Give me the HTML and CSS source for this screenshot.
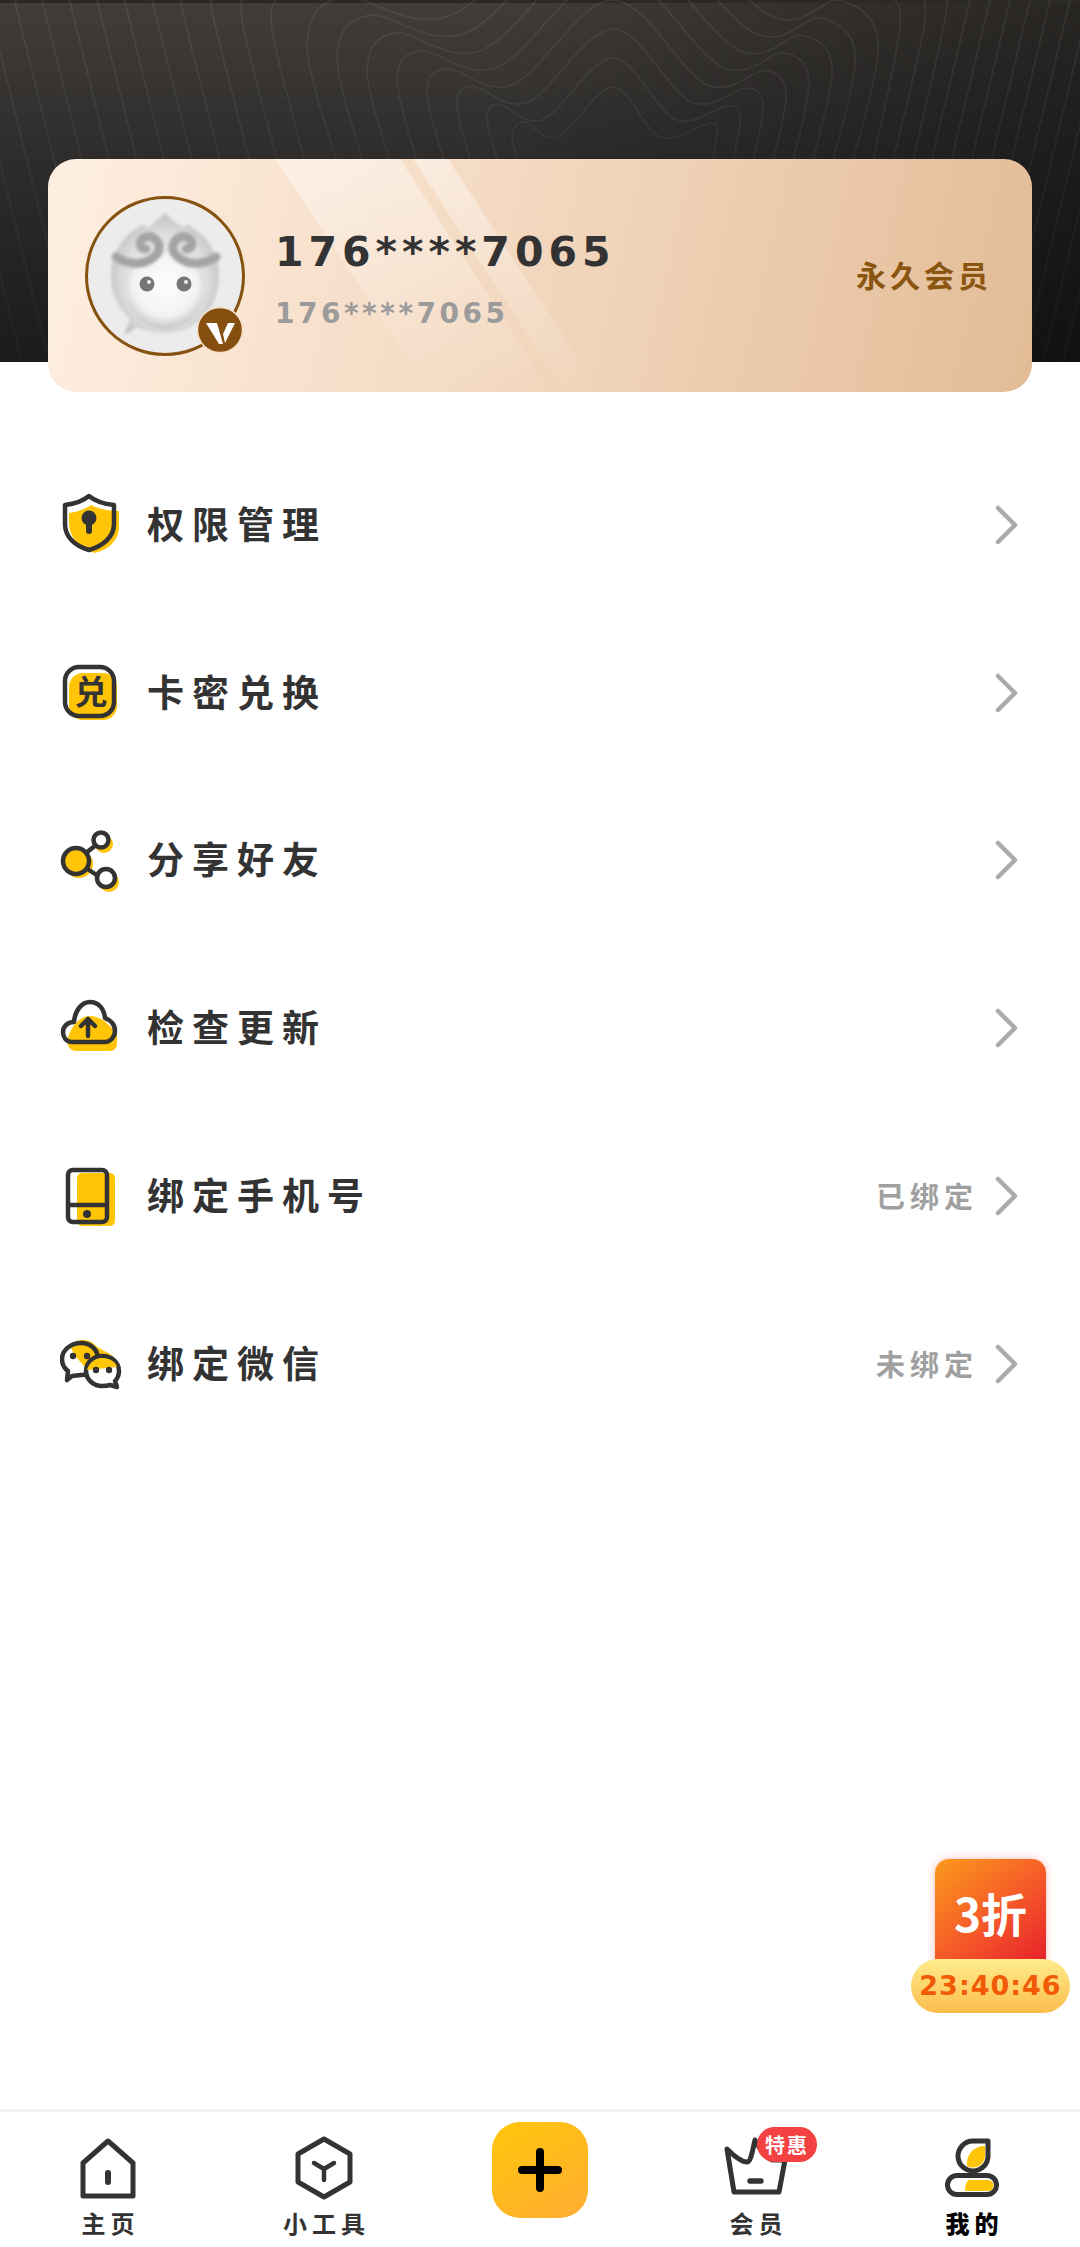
FILE: index.html
```html
<!DOCTYPE html>
<html>
  <head>
    <title>我的</title>
    <meta http-equiv="Content-Type" content="text/html; charset=UTF-8"/>
    <link rel="stylesheet" href="styles.css">
  </head>
  <body>
    <div class="page">
      <header class="hero">
        <svg class="hero-lines" viewBox="0 0 1080 362" fill="none">
          <defs>
            <linearGradient id="fade" gradientUnits="userSpaceOnUse" x1="0" y1="0" x2="0" y2="362">
              <stop offset="0" stop-color="#fff" stop-opacity=".07"/>
              <stop offset="1" stop-color="#fff" stop-opacity=".025"/>
            </linearGradient>
          </defs>
          <g id="contours" stroke="url(#fade)" stroke-width="1.600"></g>
        </svg>
        <section class="card">
          <svg class="card-shine" viewBox="0 0 984 233">
            <defs>
              <linearGradient id="shine" x1="0" y1="0" x2="0" y2="1">
                <stop offset="0" stop-color="#fff" stop-opacity=".42"/>
                <stop offset="1" stop-color="#fff" stop-opacity=".02"/>
              </linearGradient>
            </defs>
            <polygon points="227,0 352,0 503,233 382,233" fill="url(#shine)"/>
            <polygon points="365,0 400,0 552,233 517,233" fill="url(#shine)"/>
          </svg>
          <div class="avatar">
            <svg class="avatar-face" viewBox="0 0 154 154">
              <defs>
                <filter id="soft"><feGaussianBlur stdDeviation="1.600"/></filter>
                <radialGradient id="skin" cx=".5" cy=".55" r=".55">
                  <stop offset="0" stop-color="#f2f2f2"/>
                  <stop offset=".7" stop-color="#dedede"/>
                  <stop offset="1" stop-color="#bfbfbf"/>
                </radialGradient>
                <radialGradient id="face" cx=".5" cy=".4" r=".6">
                  <stop offset="0" stop-color="#fdfdfd"/>
                  <stop offset=".72" stop-color="#f2f2f2"/>
                  <stop offset="1" stop-color="#c4c4c4"/>
                </radialGradient>
              </defs>
              <g filter="url(#soft)">
                <path d="M23 76 C23 52 38 34 54 26 L60 28 C66 24 71 20 77 14 C83 20 88 24 94 28 L100 26 C116 34 131 52 131 76 C131 110 108 134 77 134 C66 134 56 132 50 128 L36 136 L42 120 C30 110 23 94 23 76Z" fill="url(#skin)"/>
                <circle cx="77" cy="92" r="38" fill="url(#face)"/>
                <path d="M28 58 C44 68 60 66 70 54 C74 44 66 36 58 38 C50 40 50 50 58 50" fill="none" stroke="#a4a4a4" stroke-width="9" stroke-linecap="round"/>
                <path d="M128 58 C112 68 96 66 86 54 C82 44 90 36 98 38 C106 40 106 50 98 50" fill="none" stroke="#a4a4a4" stroke-width="9" stroke-linecap="round"/>
              </g>
              <circle cx="59" cy="85" r="7.500" fill="#757575"/>
              <circle cx="96" cy="85" r="7.500" fill="#757575"/>
              <circle cx="61" cy="83" r="2" fill="#eee"/>
              <circle cx="98" cy="83" r="2" fill="#eee"/>
            </svg>
            <svg class="avatar-badge" viewBox="0 0 48 48">
              <circle cx="24" cy="24" r="22.500" fill="#85500f" stroke="#f7dfc4" stroke-width="1.500"/>
              <path d="M10 17 H21 L27 38 H23Z M27 28 L32 17 H39 L29 37Z" fill="#fff"/>
            </svg>
          </div>
          <div class="user">
            <div class="user-name">176****7065</div>
            <div class="user-sub">176****7065</div>
          </div>
          <div class="user-level">永久会员</div>
        </section>
      </header>

      <main class="list">
        <div class="row">
          <svg class="row-icon" viewBox="0 0 64 64">
            <path d="M31 12 C39 16 49 18 59 18 V34 C59 48 47 57 35 60 C21 56 10 46 9 31 V20 C17 19 25 16 31 12Z" fill="#ffc506"/>
            <path d="M29 3 C35 8 44 11 54 12 V31 C54 44 43 53 29 57 C15 53 5 44 5 31 V12 C14 11 23 8 29 3Z" fill="none" stroke="#333" stroke-width="4.500" stroke-linejoin="round"/>
            <circle cx="29" cy="25" r="7.500" fill="#333"/>
            <path d="M29 26 V38" stroke="#333" stroke-width="6" stroke-linecap="round"/>
          </svg>
          <span class="row-title">权限管理</span>
          <svg class="chevron" viewBox="0 0 24 40"><path d="M3 3 L20 20 L3 37"/></svg>
        </div>
        <div class="row">
          <svg class="row-icon" viewBox="0 0 64 64">
            <rect x="9" y="12" width="48" height="47" rx="14" fill="#ffc506"/>
            <rect x="5" y="6" width="49" height="49" rx="14" fill="none" stroke="#333" stroke-width="4.500"/>
            <text x="31" y="43" class="icon-text">兑</text>
          </svg>
          <span class="row-title">卡密兑换</span>
          <svg class="chevron" viewBox="0 0 24 40"><path d="M3 3 L20 20 L3 37"/></svg>
        </div>
        <div class="row">
          <svg class="row-icon" viewBox="0 0 64 64">
            <circle cx="44" cy="16" r="9" fill="#ffc506"/>
            <circle cx="49" cy="54" r="10" fill="#ffc506"/>
            <circle cx="19" cy="36" r="14" fill="#ffc506"/>
            <path d="M26 25 L36 17 M26 40 L38 48" stroke="#333" stroke-width="4.500"/>
            <circle cx="16" cy="33" r="13" fill="#ffc506" stroke="#333" stroke-width="4.500"/>
            <circle cx="41" cy="12" r="7.500" fill="#fff" stroke="#333" stroke-width="4.500"/>
            <circle cx="46" cy="50" r="9" fill="#fff" stroke="#333" stroke-width="4.500"/>
          </svg>
          <span class="row-title">分享好友</span>
          <svg class="chevron" viewBox="0 0 24 40"><path d="M3 3 L20 20 L3 37"/></svg>
        </div>
        <div class="row">
          <svg class="row-icon" viewBox="0 0 64 64">
            <path d="M7 46 C9 34 18 20 30 20 C42 20 50 30 57 38 V48 C57 52 54 55 50 55 H16 C11 55 8 51 7 46Z" fill="#ffc506"/>
            <path d="M12 46 C6 46 3 41 3 36 C3 30 8 26 14 26 C15 14 22 6 30 6 C38 6 44 12 45 22 C51 24 55 29 55 35 C55 41 50 46 45 46Z" fill="none" stroke="#333" stroke-width="4.500" stroke-linejoin="round"/>
            <path d="M28 40 V24 M21 30 L28 23 L35 30" fill="none" stroke="#333" stroke-width="4.500" stroke-linecap="round" stroke-linejoin="round"/>
          </svg>
          <span class="row-title">检查更新</span>
          <svg class="chevron" viewBox="0 0 24 40"><path d="M3 3 L20 20 L3 37"/></svg>
        </div>
        <div class="row">
          <svg class="row-icon" viewBox="0 0 64 64">
            <rect x="17" y="9" width="38" height="53" rx="5" fill="#ffc506"/>
            <rect x="8" y="6" width="39" height="52" rx="5" fill="none" stroke="#333" stroke-width="4.500"/>
            <path d="M8 41 H47" stroke="#333" stroke-width="4.500"/>
            <circle cx="27" cy="50" r="4" fill="#333"/>
          </svg>
          <span class="row-title">绑定手机号</span>
          <span class="row-value">已绑定</span>
          <svg class="chevron" viewBox="0 0 24 40"><path d="M3 3 L20 20 L3 37"/></svg>
        </div>
        <div class="row">
          <svg class="row-icon" viewBox="0 0 64 64">
            <path d="M10 14 C16 6 30 6 36 14 C40 18 56 22 58 32 L44 52 C28 38 16 28 10 14Z" fill="#ffc506"/>
            <path d="M21 11 C31 11 38 18 38 27 C38 36 31 43 21 43 L12 44 L7 48 L8 39 C4 36 2 32 2 27 C2 18 11 11 21 11Z" fill="none" stroke="#333" stroke-width="4.500" stroke-linejoin="round"/>
            <path d="M42 24 C52 24 59 31 59 39 C59 43 58 46 55 49 L57 55 L50 53 C47 54 45 54 42 54 C33 54 26 47 26 39 C26 31 33 24 42 24Z" fill="#fff" stroke="#333" stroke-width="4.500" stroke-linejoin="round"/>
            <path d="M27 38 A16 16 0 0 1 42 26 C50 26 56 30 57 35Z" fill="#ffc506"/>
            <circle cx="13" cy="24" r="3.200" fill="#333"/>
            <circle cx="27" cy="24" r="3.200" fill="#333"/>
            <circle cx="36" cy="38" r="3.200" fill="#333"/>
            <circle cx="49" cy="38" r="3.200" fill="#333"/>
          </svg>
          <span class="row-title">绑定微信</span>
          <span class="row-value">未绑定</span>
          <svg class="chevron" viewBox="0 0 24 40"><path d="M3 3 L20 20 L3 37"/></svg>
        </div>
      </main>

      <aside class="promo">
        <div class="promo-box">3折</div>
        <div class="promo-time">23:40:46</div>
      </aside>

      <nav class="tabs">
        <div class="tab">
          <svg class="tab-icon" viewBox="0 0 64 64">
            <path d="M32 5 L57 27 V60 H7 V27Z" fill="none" stroke="#333" stroke-width="5" stroke-linejoin="round"/>
            <path d="M32 37 V46" stroke="#333" stroke-width="6" stroke-linecap="round"/>
          </svg>
          <span class="tab-label">主页</span>
        </div>
        <div class="tab">
          <svg class="tab-icon" viewBox="0 0 64 64">
            <path d="M32 3 L58 18 V46 L32 61 L6 46 V18Z" fill="none" stroke="#333" stroke-width="5" stroke-linejoin="round"/>
            <path d="M22 27 L32 33 L42 27 M32 33 V44" fill="none" stroke="#333" stroke-width="4.500" stroke-linecap="round" stroke-linejoin="round"/>
          </svg>
          <span class="tab-label">小工具</span>
        </div>
        <div class="tab">
          <div class="tab-add">
            <svg class="tab-plus" viewBox="0 0 44 44"><path d="M22 4 V40 M4 22 H40"/></svg>
          </div>
        </div>
        <div class="tab">
          <div class="tab-vip">
            <svg class="tab-icon" viewBox="0 0 64 64">
              <path d="M3 13 C10 20 18 26 23 26 C27 26 29 12 31 4 C36 14 44 24 50 24 L61 24 L55 56 H10Z" fill="none" stroke="#333" stroke-width="5" stroke-linejoin="round"/>
              <path d="M26 45 H37" stroke="#333" stroke-width="5.500" stroke-linecap="round"/>
            </svg>
            <span class="tab-badge">特惠</span>
          </div>
          <span class="tab-label">会员</span>
        </div>
        <div class="tab">
          <svg class="tab-icon" viewBox="0 0 64 64">
            <path d="M48 5 H33 A15 15 0 1 0 48 20Z" fill="#fff" stroke="#333" stroke-width="5" stroke-linejoin="round"/>
            <path d="M45 10 V20 A12 12 0 0 1 27 30 C26 18 34 10 45 10Z" fill="#ffc506"/>
            <rect x="7.500" y="39.500" width="49" height="19" rx="9.500" fill="#fff" stroke="#333" stroke-width="5"/>
            <path d="M29 44 H48 A5.500 5.500 0 0 1 48 55 H25 C25 50 26 46 29 44Z" fill="#ffc506"/>
          </svg>
          <span class="tab-label tab-label-on">我的</span>
        </div>
      </nav>
    </div>
    <script src="lines.js"></script>
  </body>
</html>
```

FILE: styles.css
```css
body {
  margin: 0;
  background: #fff;
  font-family: 'Noto Sans CJK SC', 'Noto Sans', sans-serif;
  font-weight: bold;
  color: #333;
}

.page {
  position: relative;
  display: flex;
  flex-direction: column;
  width: 1080px;
  height: 2247px;
  overflow: hidden;
}

/* header */
.hero {
  position: relative;
  padding: 159px 48px 0;
  background:
    linear-gradient(#2b2926, #2b2926) 0 0 / 100% 3px no-repeat,
    linear-gradient(90deg, rgba(0, 0, 0, 0) 45%, rgba(0, 0, 0, .38)) 0 0 / 100% 362px no-repeat,
    linear-gradient(#413d39, #2d2c2b 45%, #1b1b1d) 0 0 / 100% 362px no-repeat;
}

.hero-lines {
  position: absolute;
  left: 0;
  top: 0;
  width: 1080px;
  height: 362px;
}

.card {
  position: relative;
  display: flex;
  align-items: center;
  height: 233px;
  padding: 0 40px 0 37px;
  border-radius: 28px;
  background: linear-gradient(103deg, #feefe2, #f5dcc5 40%, #e3bc97);
  overflow: hidden;
}

.card-shine {
  position: absolute;
  left: 0;
  top: 0;
  width: 984px;
  height: 233px;
}

.avatar {
  position: relative;
  flex: none;
  width: 154px;
  height: 154px;
  border: 3px solid #85520f;
  border-radius: 50%;
  background: #ececec;
}

.avatar-face {
  display: block;
  width: 154px;
  height: 154px;
}

.avatar-badge {
  position: absolute;
  right: -2px;
  bottom: -1px;
  width: 48px;
  height: 48px;
}

.user {
  position: relative;
  display: flex;
  flex-direction: column;
  margin-left: 30px;
  padding-top: 6px;
  gap: 20px;
}

.user-name {
  font-family: 'DejaVu Sans', sans-serif;
  font-size: 41px;
  line-height: 50px;
  letter-spacing: 5px;
  color: #333;
}

.user-sub {
  font-family: 'DejaVu Sans', sans-serif;
  font-size: 28px;
  line-height: 34px;
  letter-spacing: 3.500px;
  color: #9b9b9b;
}

.user-level {
  position: relative;
  margin-left: auto;
  padding-bottom: 3px;
  font-size: 30px;
  letter-spacing: 4px;
  color: #8a5510;
}

/* list */
.list {
  flex: 1;
  padding-top: 49px;
}

.row {
  display: flex;
  align-items: center;
  height: 167.800px;
  padding: 0 61px 0 60px;
}

.row-icon {
  flex: none;
  width: 64px;
  height: 64px;
}

.icon-text {
  font-size: 33px;
  font-weight: bold;
  fill: #333;
  text-anchor: middle;
}

.row-title {
  margin-left: 23px;
  padding-bottom: 4px;
  font-size: 37px;
  letter-spacing: 8px;
  color: #333;
}

.row-value {
  margin-left: auto;
  padding-bottom: 2px;
  font-size: 29px;
  letter-spacing: 5px;
  color: #a0a0a0;
}

.chevron {
  flex: none;
  width: 24px;
  height: 40px;
  margin-left: 17px;
  fill: none;
  stroke: #aaa;
  stroke-width: 4.500;
  stroke-linecap: round;
  stroke-linejoin: round;
}

.row-title + .chevron {
  margin-left: auto;
}

/* floating discount */
.promo {
  position: absolute;
  left: 911px;
  top: 1859px;
  display: flex;
  flex-direction: column;
  align-items: center;
  width: 159px;
}

.promo-box {
  width: 111px;
  height: 104px;
  padding-top: 22px;
  box-sizing: border-box;
  border-radius: 14px 14px 0 0;
  background: linear-gradient(140deg, #fb9a1c, #f4522a 60%, #e6202a);
  box-shadow: 0 0 8px rgba(240, 70, 50, .35);
  font-size: 46px;
  line-height: 62px;
  text-align: center;
  color: #fff;
}

.promo-time {
  width: 159px;
  height: 54px;
  margin-top: -4px;
  border-radius: 27px;
  background: linear-gradient(#ffec8c, #fbbd4c);
  font-family: 'DejaVu Sans', sans-serif;
  font-size: 27px;
  line-height: 54px;
  letter-spacing: 1px;
  text-align: center;
  color: #f25a05;
}

/* bottom tabs */
.tabs {
  display: grid;
  grid-template-columns: repeat(5, 1fr);
  height: 135px;
  border-top: 3px solid #f2f2f2;
}

.tab {
  display: flex;
  flex-direction: column;
  align-items: center;
  padding-top: 24px;
}

.tab-icon {
  display: block;
  width: 64px;
  height: 64px;
}

.tab-label {
  margin-top: 7px;
  font-size: 24px;
  line-height: 32px;
  letter-spacing: 5px;
  margin-right: -5px;
  color: #333;
}

.tab-label-on {
  color: #000;
  font-weight: 900;
}

.tab-add {
  display: flex;
  align-items: center;
  justify-content: center;
  width: 96px;
  height: 96px;
  margin-top: -14px;
  border-radius: 28px;
  background: linear-gradient(150deg, #ffc60a, #ffad33);
}

.tab-plus {
  width: 44px;
  height: 44px;
  fill: none;
  stroke: #000;
  stroke-width: 8;
  stroke-linecap: round;
}

.tab-vip {
  position: relative;
}

.tab-badge {
  position: absolute;
  left: 33px;
  top: -9px;
  width: 60px;
  height: 35px;
  border-radius: 18px;
  background: #f44141;
  font-size: 20px;
  line-height: 35px;
  letter-spacing: 2px;
  text-align: center;
  color: #fff;
}
```

FILE: lines.js
```js
// contour lines behind the card, drawn as smooth curves through a few points
var group = document.getElementById('contours');

function addLine(pts) {
  var d = 'M' + pts[0][0] + ' ' + pts[0][1];
  for (var i = 0; i < pts.length - 1; i++) {
    var p0 = pts[i - 1] || pts[i];
    var p1 = pts[i];
    var p2 = pts[i + 1];
    var p3 = pts[i + 2] || p2;
    d += ' C' + (p1[0] + (p2[0] - p0[0]) / 6) + ' ' + (p1[1] + (p2[1] - p0[1]) / 6) +
      ' ' + (p2[0] - (p3[0] - p1[0]) / 6) + ' ' + (p2[1] - (p3[1] - p1[1]) / 6) +
      ' ' + p2[0] + ' ' + p2[1];
  }
  var path = document.createElementNS('http://www.w3.org/2000/svg', 'path');
  path.setAttribute('d', d);
  group.appendChild(path);
}

var sideY = [135, 118, 105, 92, 80, 70, 57, 43];
for (var k = 0; k < 8; k++) {
  var sx = 512 - 30 * k + (k ? 5 : 0);
  var sy = sideY[k];
  addLine([
    [sx + (165 - sy) * 0.25, 165],
    [sx, sy],
    [525 - 26 * k, 122 - 17.8 * k],
    [558 - 15 * k, 137 - 17.5 * k],
    [613, 87 - 29 * k],
    [660 + 15.5 * k, 137 - 17.5 * k],
    [710 + 18.5 * k, 123 - 17.5 * k],
    [717 + 23 * k, 133 - 13 * k],
    [712 + 20 * k, 165]
  ]);
}

// left side, curving in at the top
[[272, 30], [242, 20], [212, 10], [181, 3]].forEach(function (s) {
  addLine([[s[0] + (165 - s[1]) * 0.25, 165], [s[0], s[1]], [s[0] + 8, -6]]);
});

// right side, curving in at the top
[[872, 900, 27], [892, 925, 20], [912, 947, 7]].forEach(function (s) {
  addLine([[s[0], 165], [s[1], s[2]], [s[1] - 12, -8]]);
});

// straight runs towards both edges
for (var x = 152; x > -90; x -= 27.5) {
  addLine([[x, 0], [x + 90, 362]]);
}
for (var x = 970; x < 1200; x += 20) {
  addLine([[x, 0], [x - 87, 362]]);
}
```
